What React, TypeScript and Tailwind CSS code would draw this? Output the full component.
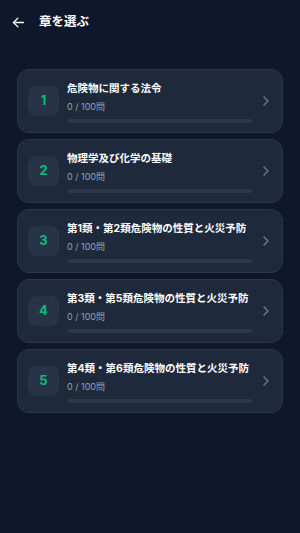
import React from "react";

const chapters = [
  "危険物に関する法令",
  "物理学及び化学の基礎",
  "第1類・第2類危険物の性質と火災予防",
  "第3類・第5類危険物の性質と火災予防",
  "第4類・第6類危険物の性質と火災予防",
];

export default function App() {
  return (
    <div
      className="w-[300px] h-[533px] bg-[#0f172a] text-white overflow-hidden"
      style={{ fontFamily: 'Inter, "Noto Sans CJK JP", sans-serif' }}
    >
      <div className="flex items-center h-[44px] pl-[11px] gap-[13px]">
        <svg width="15" height="15" viewBox="0 0 24 24" fill="none" stroke="white" strokeWidth="2.2" strokeLinecap="round" strokeLinejoin="round">
          <path d="M20 12H4" />
          <path d="M11 19l-7-7 7-7" />
        </svg>
        <span className="text-[12.5px] font-bold">章を選ぶ</span>
      </div>
      <div className="flex flex-col gap-[6px] mx-[17px] mt-[25px]">
        {chapters.map((title, i) => (
          <div
            key={i}
            className="flex items-center h-[64px] rounded-[12px] bg-[#1e293b] border border-[#2b374a] pl-[10px] pr-[8px]"
          >
            <div className="w-[31px] h-[30px] rounded-[8px] bg-[#273347] flex items-center justify-center text-[#10b981] font-bold text-[13px] shrink-0">
              {i + 1}
            </div>
            <div className="w-[185px] ml-[8px] pt-[3px] flex flex-col shrink-0">
              <div className="text-[10.5px] font-bold leading-[14px] whitespace-nowrap">{title}</div>
              <div className="text-[9px] text-[#94a3b8] leading-[12px] mt-[5px]">0 / 100問</div>
              <div className="h-[4px] rounded-full bg-[#2b384b] mt-[6px]" />
            </div>
            <svg className="ml-auto" width="16" height="16" viewBox="0 0 24 24" fill="none" stroke="#64748b" strokeWidth="2.5" strokeLinecap="round" strokeLinejoin="round">
              <path d="M9 18l6-6-6-6" />
            </svg>
          </div>
        ))}
      </div>
    </div>
  );
}
